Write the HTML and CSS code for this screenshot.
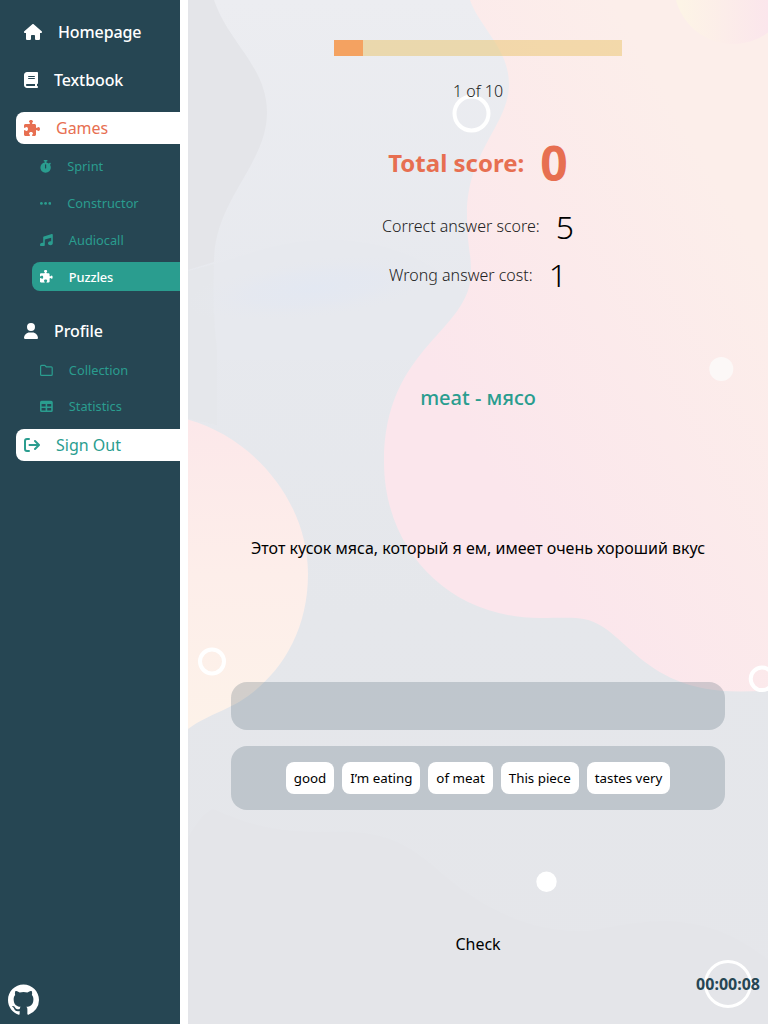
FILE: index.html
```html
<!DOCTYPE html>
<html lang="en">
<head>
<meta charset="utf-8">
<title>Puzzles</title>
<link rel="stylesheet" href="styles.css">
</head>
<body>
<svg class="defs" width="0" height="0">
  <symbol id="puzzle" viewBox="0 0 512 512"><path d="M192 104.800c0-9.200-5.800-17.300-13.200-22.800C167.200 73.300 160 61.300 160 48c0-26.500 28.700-48 64-48s64 21.500 64 48c0 13.300-7.200 25.300-18.800 34c-7.400 5.500-13.200 13.600-13.200 22.800c0 12.800 10.400 23.200 23.200 23.200H336c26.500 0 48 21.500 48 48v56.800c0 12.800 10.400 23.200 23.200 23.200c9.200 0 17.300-5.800 22.800-13.200c8.700-11.600 20.700-18.800 34-18.800c26.500 0 48 28.700 48 64s-21.500 64-48 64c-13.300 0-25.300-7.200-34-18.800c-5.500-7.400-13.600-13.200-22.800-13.200c-12.800 0-23.200 10.400-23.200 23.200V464c0 26.500-21.500 48-48 48H279.200c-12.800 0-23.200-10.400-23.200-23.200c0-9.200 5.800-17.300 13.200-22.800c11.600-8.700 18.800-20.700 18.800-34c0-26.500-28.700-48-64-48s-64 21.500-64 48c0 13.300 7.200 25.300 18.800 34c7.400 5.500 13.200 13.600 13.200 22.800c0 12.800-10.400 23.200-23.200 23.200H48c-26.500 0-48-21.500-48-48V343.200C0 330.400 10.400 320 23.200 320c9.200 0 17.300 5.800 22.800 13.200C54.700 344.800 66.700 352 80 352c26.500 0 48-28.700 48-64s-21.500-64-48-64c-13.300 0-25.300 7.200-34 18.800C40.500 250.200 32.400 256 23.200 256C10.400 256 0 245.600 0 232.800V176c0-26.500 21.500-48 48-48H168.800c12.800 0 23.200-10.400 23.200-23.200z"/></symbol>
</svg>
<div class="app">
  <aside class="sidebar">
    <nav class="nav">
      <a class="item"><svg class="icon" viewBox="0 0 576 512"><path d="M575.8 255.500c0 18-15 32.100-32 32.100h-32l.7 160.200c0 2.700-.2 5.400-.5 8.100V472c0 22.100-17.900 40-40 40H392c-22.100 0-40-17.900-40-40V384c0-17.700-14.300-32-32-32H256c-17.700 0-32 14.300-32 32v88c0 22.100-17.900 40-40 40H104c-22.100 0-40-17.900-40-40V287.600H32c-18 0-32-14-32-32.100c0-9 3-17 10-24L266.400 8c7-7 15-8 22-8s15 2 21 7L564.800 231.500c8 7 12 15 11 24z"/></svg><span>Homepage</span></a>
      <a class="item"><svg class="icon" viewBox="0 0 448 512"><path d="M96 0C43 0 0 43 0 96V416c0 53 43 96 96 96H416c17.700 0 32-14.300 32-32s-14.300-32-32-32V384c17.700 0 32-14.300 32-32V32c0-17.700-14.300-32-32-32H96zm0 384H352v64H96c-17.700 0-32-14.300-32-32s14.300-32 32-32zm32-240c0-8.800 7.200-16 16-16H336c8.800 0 16 7.200 16 16s-7.200 16-16 16H144c-8.800 0-16-7.200-16-16zm16 48H336c8.800 0 16 7.200 16 16s-7.200 16-16 16H144c-8.800 0-16-7.200-16-16s7.200-16 16-16z"/></svg><span>Textbook</span></a>
      <a class="item item-games"><svg class="icon" viewBox="0 0 512 512"><use href="#puzzle"/></svg><span>Games</span></a>
    </nav>
    <nav class="subnav">
      <a class="sub"><svg class="icon" viewBox="0 0 448 512"><path d="M176 0c-17.700 0-32 14.300-32 32s14.300 32 32 32h16V98.400C92.300 113.800 16 200 16 304c0 114.900 93.100 208 208 208s208-93.100 208-208c0-41.800-12.300-80.700-33.500-113.200l24.100-24.100c12.500-12.500 12.500-32.800 0-45.300s-32.800-12.500-45.300 0L355.700 143c-28.100-23-62.200-38.800-99.700-44.600V64h16c17.700 0 32-14.300 32-32s-14.300-32-32-32H176zm72 192V320c0 13.300-10.700 24-24 24s-24-10.700-24-24V192c0-13.300 10.700-24 24-24s24 10.700 24 24z"/></svg><span>Sprint</span></a>
      <a class="sub"><svg class="icon" viewBox="0 0 448 512"><circle cx="56" cy="256" r="56"/><circle cx="224" cy="256" r="56"/><circle cx="392" cy="256" r="56"/></svg><span>Constructor</span></a>
      <a class="sub"><svg class="icon" viewBox="0 0 512 512"><path d="M499.100 6.300c8.100 6 12.900 15.600 12.900 25.700V368c0 44.200-43 80-96 80s-96-35.800-96-80s43-80 96-80c11.200 0 22 1.600 32 4.600V147L192 223.800V432c0 44.200-43 80-96 80s-96-35.800-96-80s43-80 96-80c11.200 0 22 1.600 32 4.600V128c0-14.100 9.300-26.600 22.800-30.700l320-96c9.700-2.900 20.200-1.100 28.300 5z"/></svg><span>Audiocall</span></a>
      <a class="sub sub-active"><svg class="icon" viewBox="0 0 512 512"><use href="#puzzle"/></svg><span>Puzzles</span></a>
    </nav>
    <a class="item item-profile"><svg class="icon" viewBox="0 0 448 512"><path d="M224 256A128 128 0 1 0 224 0a128 128 0 1 0 0 256zm-45.700 48C79.800 304 0 383.800 0 482.300C0 498.700 13.300 512 29.700 512H418.300c16.400 0 29.700-13.300 29.700-29.700C448 383.800 368.200 304 269.700 304H178.300z"/></svg><span>Profile</span></a>
    <nav class="subnav subnav-profile">
      <a class="sub"><svg class="icon" viewBox="0 0 512 512"><path class="line" d="M64 56H190L250 112H448Q488 112 488 152V416Q488 456 448 456H64Q24 456 24 416V96Q24 56 64 56Z"/></svg><span>Collection</span></a>
      <a class="sub"><svg class="icon" viewBox="0 0 512 512"><path fill-rule="evenodd" d="M64 32H448Q512 32 512 96V416Q512 480 448 480H64Q0 480 0 416V96Q0 32 64 32ZM64 160V256H224V160ZM288 160V256H448V160ZM64 320V416H224V320ZM288 320V416H448V320Z"/></svg><span>Statistics</span></a>
    </nav>
    <a class="item item-out"><svg class="icon" viewBox="0 0 512 512"><path class="bold-line" d="M160 64H96Q32 64 32 128V384Q32 448 96 448H160M176 256H476M352 128L480 256L352 384"/></svg><span>Sign Out</span></a>
    <a class="github"><svg viewBox="0 0 16 16"><path d="M8 0C3.580 0 0 3.580 0 8c0 3.540 2.290 6.530 5.470 7.590.4.070.55-.17.55-.38 0-.19-.01-.82-.01-1.490-2.010.37-2.530-.49-2.690-.94-.09-.23-.48-.94-.82-1.130-.28-.15-.68-.52-.01-.53.63-.01 1.080.58 1.230.82.72 1.210 1.870.87 2.330.66.07-.52.28-.87.51-1.070-1.780-.2-3.640-.89-3.640-3.950 0-.87.31-1.590.82-2.150-.08-.2-.36-1.020.08-2.120 0 0 .67-.21 2.200.82.64-.18 1.320-.27 2-.27s1.360.09 2 .27c1.530-1.040 2.200-.82 2.200-.82.44 1.100.16 1.920.08 2.120.51.56.82 1.270.82 2.150 0 3.070-1.870 3.750-3.650 3.950.29.25.54.73.54 1.480 0 1.070-.01 1.930-.01 2.200 0 .21.15.46.55.38A8.010 8.010 0 0 0 16 8c0-4.420-3.580-8-8-8z"/></svg></a>
  </aside>
  <main class="game">
    <svg class="backdrop" viewBox="188 0 580 1024" preserveAspectRatio="none">
      <defs>
        <linearGradient id="base" x1="0" y1="0" x2="0" y2="1"><stop offset="0" stop-color="#ecedf1"/><stop offset=".3" stop-color="#e7e9ee"/><stop offset=".6" stop-color="#e5e7eb"/><stop offset="1" stop-color="#e5e6ea"/></linearGradient>
        <linearGradient id="blob" gradientUnits="userSpaceOnUse" x1="470" y1="440" x2="768" y2="270"><stop offset="0" stop-color="#fbe6ec"/><stop offset="1" stop-color="#fceeea"/></linearGradient>
        <linearGradient id="peach" x1="0" y1="0" x2="0" y2="1"><stop offset="0" stop-color="#fce8ea"/><stop offset=".5" stop-color="#fdeeea"/><stop offset="1" stop-color="#fdf2e9"/></linearGradient>
        <linearGradient id="sun" gradientUnits="userSpaceOnUse" x1="680" y1="0" x2="768" y2="0"><stop offset="0" stop-color="#fdf4e6"/><stop offset="1" stop-color="#fbe6ec"/></linearGradient>
        <radialGradient id="mist"><stop offset="0" stop-color="#e3e8f2"/><stop offset=".5" stop-color="#e4e8f1" stop-opacity=".7"/><stop offset="1" stop-color="#e7e9ee" stop-opacity="0"/></radialGradient>
      </defs>
      <path fill="url(#base)" d="M188 0H768V1024H188Z"/>
      <path fill="#e4e5e9" d="M188 0H214C228 42 267 67 267 112C267 165 214 200 214 262L188 270Z"/>
      <path fill="#e7e9ee" d="M188 271C240 260 270 240 330 240C390 240 440 265 465 295V360H188Z"/>
      <path fill="#e5e6ea" opacity=".6" d="M188 271L214 264Q212 310 217 350V425L188 418Z"/>
      <ellipse fill="url(#mist)" cx="315" cy="288" rx="130" ry="32" transform="rotate(-7 315 288)"/>
      <path fill="#e4e5e9" d="M188 838Q200 815 213 809C250 826 280 833 330 832C410 828 425 865 470 895C510 922 550 933 590 931C640 922 700 905 768 960V1024H188Z"/>
      <path fill="url(#blob)" d="M470 0C480 28 509 49 509 84C509 125 467 151 467 214C467 246 471 250 471 272C471 332 384 346 384 462C384 548 447 618 540 618C554 618 566 617.500 576 618C626 620 634 691.500 740 691.500L768 691V0Z"/>
      <path fill="url(#peach)" d="M188 419.500C254 438 308 502 308 574C308 628 284 668 252 693C229 711 210 713 188 729Z"/>
      <circle fill="url(#sun)" cx="733" cy="-15" r="59"/>
      <g fill="none" stroke="#fff" stroke-width="4"><circle cx="471.500" cy="113.500" r="17"/><circle cx="212" cy="661.500" r="12"/><circle cx="762" cy="678.800" r="11.300"/></g>
      <circle fill="#fcf8f7" cx="721.300" cy="369" r="12"/>
      <circle fill="#fff" cx="546.500" cy="881.700" r="10.200"/>
    </svg>
    <div class="content">
      <div class="progress"><div class="progress-fill" style="width:10%"></div></div>
      <div class="counter">1 of 10</div>
      <div class="score total"><span>Total score:</span><span class="num">0</span></div>
      <div class="score correct"><span>Correct answer score:</span><span class="num">5</span></div>
      <div class="score wrong"><span>Wrong answer cost:</span><span class="num">1</span></div>
      <div class="word">meat - мясо</div>
      <div class="sentence">Этот кусок мяса, который я ем, имеет очень хороший вкус</div>
      <div class="tray answer"></div>
      <div class="tray pieces"><span class="chip">good</span><span class="chip">I’m eating</span><span class="chip">of meat</span><span class="chip">This piece</span><span class="chip">tastes very</span></div>
      <div class="check">Check</div>
    </div>
    <div class="timer"><span class="ring"></span><span class="time">00:00:08</span></div>
  </main>
</div>
</body>
</html>
```
FILE: styles.css
```css
* { box-sizing: border-box; }
body { margin: 0; background: #fff; color: #000; font: 400 16px/20px "Noto Sans", sans-serif; }
.defs { position: absolute; }
.app { display: flex; gap: 8px; height: 1024px; overflow: hidden; }
.sidebar { width: 180px; flex: none; background: #264653; display: flex; flex-direction: column; padding: 16px 0 8px 16px; }
.nav { display: flex; flex-direction: column; gap: 16px; }
.item { display: flex; align-items: center; gap: 16px; height: 32px; flex: none; padding-left: 8px; color: #fff; font-weight: 500; letter-spacing: -.1px; border-radius: 8px 0 0 8px; }
.icon { height: 1em; width: auto; flex: none; fill: currentColor; }
.line { fill: none; stroke: currentColor; stroke-width: 48; }
.bold-line { fill: none; stroke: currentColor; stroke-width: 64; stroke-linecap: round; stroke-linejoin: round; }
.item-games { background: #fff; color: #e76f51; font-weight: 400; letter-spacing: 0; }
.subnav { display: flex; flex-direction: column; gap: 8px; padding-left: 16px; margin-top: 8px; }
.sub { display: flex; align-items: center; gap: 16px; height: 28.8px; padding: 1px 0 0 8px; font-size: 12.8px; line-height: 17px; color: #2a9d8f; border-radius: 8px 0 0 8px; }
.sub .icon { margin-bottom: 1px; }
.sub-active { background: #2a9d8f; color: #fff; font-weight: 500; letter-spacing: -.1px; }
.item-profile { margin-top: 23.6px; }
.item-out { background: #fff; color: #2a9d8f; font-weight: 400; letter-spacing: 0; margin-top: 8px; }
.subnav-profile { margin-top: 8.8px; gap: 7.6px; }
.github { margin-top: auto; margin-left: -8px; height: 32px; }
.github svg { width: 31px; height: 32px; fill: #fff; display: block; }
.game { position: relative; flex: 1; }
.backdrop { position: absolute; inset: 0; width: 100%; height: 100%; }
.content { position: relative; display: flex; flex-direction: column; align-items: center; padding-top: 40px; }
.progress { width: 288px; height: 16px; background: rgba(233, 196, 106, .5); }
.progress-fill { height: 100%; background: #f4a261; }
.counter { margin-top: 25px; font-weight: 300; color: #222; }
.score { display: flex; align-items: center; gap: 16px; font-weight: 300; }
.total { height: 60px; margin-top: 32px; font-size: 24px; font-weight: 700; color: #e76f51; }
.total .num { font-size: 48px; line-height: 60px; }
.correct, .wrong { height: 40px; }
.correct span:first-child, .wrong span:first-child { color: #222; }
.correct span:first-child { padding-bottom: 2px; }
.correct .num, .wrong .num { font-size: 32px; line-height: 40px; }
.correct { margin-top: 14px; }
.wrong { margin-top: 8px; }
.word { height: 26px; margin-top: 90px; font-size: 20px; line-height: 26px; font-weight: 500; color: #2a9d8f; }
.sentence { margin-top: 127px; white-space: nowrap; }
.tray { width: 494px; border-radius: 16px; background: rgba(38, 70, 83, .2); display: flex; align-items: center; justify-content: center; gap: 8px; }
.answer { height: 48px; margin-top: 124px; }
.pieces { height: 64px; margin-top: 16px; }
.chip { height: 32px; padding: 0 8px; border-radius: 8px; background: #fff; font-size: 13.333px; line-height: 32px; white-space: nowrap; }
.check { margin-top: 124px; }
.timer { position: absolute; right: 8px; bottom: 16px; height: 48px; display: grid; place-items: center; color: #264653; font-weight: 700; }
.ring, .time { grid-area: 1 / 1; }
.ring { width: 48px; height: 48px; border: 3px solid #fff; border-radius: 50%; }
```
